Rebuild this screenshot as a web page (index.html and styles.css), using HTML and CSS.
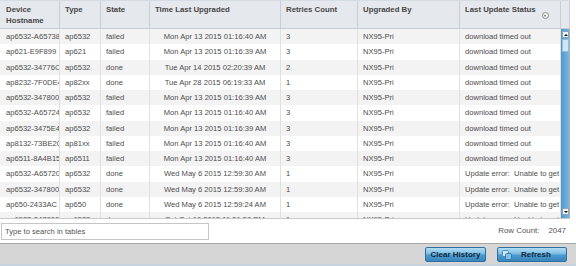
FILE: index.html
```
<!DOCTYPE html>
<html>
<head>
<meta charset="utf-8">
<link rel="stylesheet" href="styles.css">
</head>
<body>
<div class="table">
  <div class="thead">
    <div class="th">Device<br>Hostname</div>
    <div class="th">Type</div>
    <div class="th">State</div>
    <div class="th">Time Last Upgraded</div>
    <div class="th">Retries Count</div>
    <div class="th">Upgraded By</div>
    <div class="th th-last"><span>Last Update Status</span><span class="sort-icon"></span></div>
    <div class="th th-scroll"></div>
  </div>
  <div class="tbody">
    <div class="rows">
      <div class="row"><div class="td host">ap6532-A65738</div><div class="td">ap6532</div><div class="td">failed</div><div class="td time">Mon Apr 13 2015 01:16:40 AM</div><div class="td">3</div><div class="td">NX95-Pri</div><div class="td">download timed out</div></div>
      <div class="row"><div class="td host">ap621-E9F899</div><div class="td">ap621</div><div class="td">failed</div><div class="td time">Mon Apr 13 2015 01:16:39 AM</div><div class="td">3</div><div class="td">NX95-Pri</div><div class="td">download timed out</div></div>
      <div class="row"><div class="td host">ap6532-34776C</div><div class="td">ap6532</div><div class="td">done</div><div class="td time">Tue Apr 14 2015 02:20:39 AM</div><div class="td">2</div><div class="td">NX95-Pri</div><div class="td">download timed out</div></div>
      <div class="row"><div class="td host">ap8232-7F0DE4</div><div class="td">ap82xx</div><div class="td">done</div><div class="td time">Tue Apr 28 2015 06:19:33 AM</div><div class="td">1</div><div class="td">NX95-Pri</div><div class="td">download timed out</div></div>
      <div class="row"><div class="td host">ap6532-347800</div><div class="td">ap6532</div><div class="td">failed</div><div class="td time">Mon Apr 13 2015 01:16:39 AM</div><div class="td">3</div><div class="td">NX95-Pri</div><div class="td">download timed out</div></div>
      <div class="row"><div class="td host">ap6532-A65724</div><div class="td">ap6532</div><div class="td">failed</div><div class="td time">Mon Apr 13 2015 01:16:40 AM</div><div class="td">3</div><div class="td">NX95-Pri</div><div class="td">download timed out</div></div>
      <div class="row"><div class="td host">ap6532-3475E4</div><div class="td">ap6532</div><div class="td">failed</div><div class="td time">Mon Apr 13 2015 01:16:39 AM</div><div class="td">3</div><div class="td">NX95-Pri</div><div class="td">download timed out</div></div>
      <div class="row"><div class="td host">ap8132-73BE20</div><div class="td">ap81xx</div><div class="td">failed</div><div class="td time">Mon Apr 13 2015 01:16:40 AM</div><div class="td">3</div><div class="td">NX95-Pri</div><div class="td">download timed out</div></div>
      <div class="row"><div class="td host">ap6511-8A4B15</div><div class="td">ap6511</div><div class="td">failed</div><div class="td time">Mon Apr 13 2015 01:16:40 AM</div><div class="td">3</div><div class="td">NX95-Pri</div><div class="td">download timed out</div></div>
      <div class="row"><div class="td host">ap6532-A65720</div><div class="td">ap6532</div><div class="td">done</div><div class="td time">Wed May 6 2015 12:59:30 AM</div><div class="td">1</div><div class="td">NX95-Pri</div><div class="td">Update error:&nbsp; Unable to get data</div></div>
      <div class="row"><div class="td host">ap6532-347800</div><div class="td">ap6532</div><div class="td">done</div><div class="td time">Wed May 6 2015 12:59:30 AM</div><div class="td">1</div><div class="td">NX95-Pri</div><div class="td">Update error:&nbsp; Unable to get data</div></div>
      <div class="row"><div class="td host">ap650-2433AC</div><div class="td">ap650</div><div class="td">done</div><div class="td time">Wed May 6 2015 12:59:24 AM</div><div class="td">1</div><div class="td">NX95-Pri</div><div class="td">Update error:&nbsp; Unable to get data</div></div>
      <div class="row"><div class="td host">ap6532-347800</div><div class="td">ap6532</div><div class="td">done</div><div class="td time">Sat Oct 10 2015 11:51:58 PM</div><div class="td">1</div><div class="td">NX95-Pri</div><div class="td">Update error:&nbsp; Unable to get data</div></div>
    </div>
    <div class="scrollbar">
      <div class="sb-btn sb-up"></div>
      <div class="sb-thumb"></div>
      <div class="sb-track"></div>
      <div class="sb-btn sb-down"></div>
    </div>
  </div>
</div>
<div class="search-row">
  <input class="search" type="text" placeholder="Type to search in tables">
  <div class="row-count"><span>Row Count:</span><span class="count">2047</span></div>
</div>
<div class="toolbar">
  <button class="btn btn-clear">Clear History</button>
  <button class="btn btn-refresh"><svg class="refresh-icon" width="10" height="10" viewBox="0 0 10 10"><rect x="0.5" y="0.5" width="6" height="6" rx="1" fill="#cfe8f8" stroke="#3a7fb5" stroke-width="0.8"/><rect x="3.5" y="3.5" width="6" height="6" rx="1" fill="#7fc0ea" stroke="#2f6fa3" stroke-width="0.8"/></svg><span>Refresh</span></button>
</div>
</body>
</html>
```
FILE: styles.css
```
* { box-sizing: border-box; }
html, body { margin: 0; padding: 0; }
body {
  width: 576px;
  height: 266px;
  overflow: hidden;
  background: #ffffff;
  font-family: "Liberation Sans", Arial, sans-serif;
  font-size: 7.6px;
  color: #4d4d4d;
}
.table {
  width: 570px;
  border-bottom: 1px solid #c9c9c9;
}
.thead {
  display: grid;
  grid-template-columns: 60px 41px 49px 131px 77px 102px 101px 9px;
  height: 29px;
  background: #e5e8ed;
  border-top: 1px solid #d5dce4;
  border-bottom: 1px solid #c6ccd4;
}
.th {
  padding: 4px 4px 0 6px;
  font-weight: bold;
  font-size: 7.8px;
  line-height: 10.5px;
  color: #474747;
  border-right: 1px solid #c9cfd7;
  white-space: nowrap;
  overflow: hidden;
}
.th + .th { padding-left: 5px; }
.th-last {
  display: flex;
  align-items: flex-start;
  gap: 6px;
}
.sort-icon {
  margin-top: 7px;
  width: 7px;
  height: 7px;
  border: 1px solid #8f8f8f;
  border-radius: 50%;
  display: flex;
  align-items: center;
  justify-content: center;
  background: #f2f2f2;
}
.sort-icon::after {
  content: "";
  width: 0;
  height: 0;
  border-left: 1.5px solid transparent;
  border-right: 1.5px solid transparent;
  border-top: 2px solid #6a6a6a;
  margin-top: 0.5px;
}
.th-scroll { padding: 0; }
.tbody {
  display: flex;
  height: 189px;
  overflow: hidden;
}
.rows {
  width: 561px;
  height: 189px;
  overflow: hidden;
}
.row {
  display: grid;
  grid-template-columns: 60px 41px 49px 131px 77px 102px 101px;
  height: 15.25px;
  line-height: 15.25px;
  background: #ffffff;
}
.row:nth-child(odd) { background: #f3f3f3; }
.td {
  padding: 0 4px 0 5px;
  white-space: nowrap;
  overflow: hidden;
  border-right: 1px solid #e0e0e0;
}
.td.host { padding-left: 6px; padding-right: 0; }
.td.time { text-align: center; padding: 0; }
.scrollbar {
  width: 9px;
  height: 189px;
  display: flex;
  flex-direction: column;
  padding: 2px 0 3px 1px;
  background: linear-gradient(to right, #4f97cb, #78b7e0);
  border-right: 1px solid #9fb3c4;
}
.sb-btn {
  height: 7px;
  background: #f4f6f8;
  border: 1px solid #8aa3b8;
  display: flex;
  align-items: center;
  justify-content: center;
}
.sb-btn::after {
  content: "";
  width: 0;
  height: 0;
  border-left: 2px solid transparent;
  border-right: 2px solid transparent;
}
.sb-up::after { border-bottom: 2.5px solid #111; }
.sb-down::after { border-top: 2.5px solid #111; }
.sb-thumb {
  height: 13px;
  margin-top: 1px;
  background: #cfe6f6;
  border: 1px solid #8fbfe0;
}
.sb-track { flex: 1; }
.search-row {
  display: flex;
  justify-content: space-between;
  align-items: center;
  height: 24px;
  padding: 0 10px 0 1px;
}
.search {
  width: 208px;
  height: 17px;
  margin: 0;
  padding: 0 3px;
  border: 1px solid #c6c6c6;
  font-family: "Liberation Sans", Arial, sans-serif;
  font-size: 7.6px;
  color: #555;
  outline: none;
  background: #fff;
}
.search::placeholder { color: #555; }
.row-count {
  display: flex;
  gap: 9px;
  color: #555;
  margin-top: -2px;
  font-size: 7.9px;
}
.toolbar {
  display: flex;
  justify-content: flex-end;
  align-items: flex-start;
  gap: 11px;
  height: 23px;
  padding: 3px 9px 0 0;
  background: #d6d6d6;
  border-top: 1px solid #a9a9a9;
  border-bottom: 2px solid #c7d3df;
}
.btn {
  height: 15px;
  margin: 0;
  padding: 0;
  border: 1px solid #2f6f9f;
  border-radius: 2px;
  background: linear-gradient(to bottom, #b4dcf2 0%, #79bde6 45%, #4a9ad0 55%, #3a86bd 100%);
  font-family: "Liberation Sans", Arial, sans-serif;
  font-size: 8px;
  font-weight: bold;
  color: #14283a;
  display: flex;
  align-items: center;
  justify-content: center;
}
.btn-clear { width: 61px; }
.btn-refresh {
  width: 70px;
  justify-content: flex-start;
  padding-left: 4px;
  gap: 9px;
}
.refresh-icon { display: block; }
```
